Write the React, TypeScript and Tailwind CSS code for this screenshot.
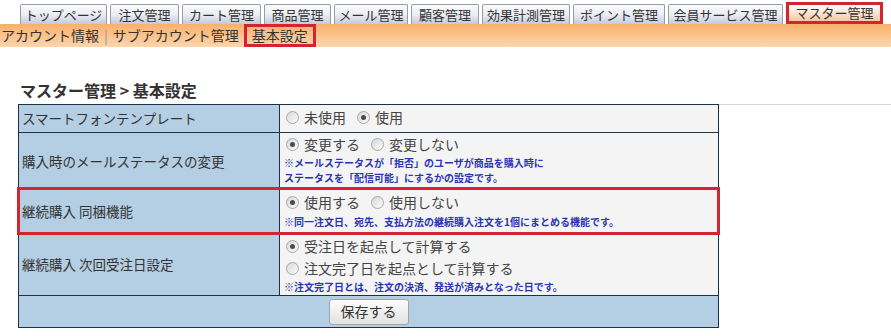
import React from "react";

const tabs: { label: string; w: string }[] = [
  { label: "トップページ", w: "w-[87px]" },
  { label: "注文管理", w: "w-[69px]" },
  { label: "カート管理", w: "w-[79px]" },
  { label: "商品管理", w: "w-[67px]" },
  { label: "メール管理", w: "w-[74px]" },
  { label: "顧客管理", w: "w-[68px]" },
  { label: "効果計測管理", w: "w-[88px]" },
  { label: "ポイント管理", w: "w-[92px]" },
  { label: "会員サービス管理", w: "w-[115px]" },
];

function Radio({ checked, label }: { checked?: boolean; label: string }) {
  return (
    <span className="inline-flex items-center gap-[5px] mr-[11px]">
      <span className="w-[13px] h-[13px] rounded-full border border-[#a9a9a9] bg-gradient-to-br from-[#d8d8d8] to-[#fbfbfb] flex items-center justify-center">
        {checked && <span className="w-[5px] h-[5px] rounded-full bg-[#4a4a4a]" />}
      </span>
      <span>{label}</span>
    </span>
  );
}

function Note({ children }: { children: React.ReactNode }) {
  return <div className="text-[10px] leading-[15px] font-bold text-[#2b35b3] -ml-[2px]">{children}</div>;
}

function Row({
  label,
  children,
  h,
  hl,
}: {
  label: string;
  children: React.ReactNode;
  h: string;
  hl?: boolean;
}) {
  return (
    <div
      className={
        "flex border-t border-[#1c3048] first:border-t-0 " +
        h +
        (hl ? " relative z-10 outline-[3px] outline-solid outline-[#d42430] -outline-offset-1" : "")
      }
    >
      <div className="w-[261px] shrink-0 border-r border-[#1c3048] flex items-center px-[3px] text-[13.5px] text-[#333]">
        {label}
      </div>
      <div className="flex-1 bg-[#f4f4f4] pl-[6px] pt-[1px] text-[14px] text-[#444] flex flex-col">{children}</div>
    </div>
  );
}

export default function App() {
  return (
    <div className="w-[891px] h-[336px] bg-white font-['Noto_Sans_CJK_JP',sans-serif] overflow-hidden">
      <nav className="flex items-end gap-[3px] pl-[20px] pt-[4px] h-[24px]">
        {tabs.map((t) => (
          <div
            key={t.label}
            className={
              t.w +
              " h-[20px] flex items-center justify-center text-[13px] text-[#333] border border-b-0 border-[#9a9ca4] rounded-t-[2px] bg-gradient-to-b from-[#fafafa] via-[#eceef4] to-[#c4c9dc]"
            }
          >
            {t.label}
          </div>
        ))}
        <div className="w-[97px] h-[22px] flex items-center justify-center text-[13px] text-[#333] border-[3px] border-[#d42430] bg-gradient-to-b from-[#ffffff] to-[#f8c7a1]">
          マスター管理
        </div>
      </nav>

      <div className="h-[23px] bg-gradient-to-b from-[#f9b06c] to-[#fdd5ad] flex items-center text-[14px] text-[#333]">
        <span className="pl-[1px]">アカウント情報</span>
        <span className="text-[#999] px-[5px]">|</span>
        <span>サブアカウント管理</span>
        <span className="ml-[5px] h-[23px] px-[5px] flex items-center border-[3px] border-[#d42430]">基本設定</span>
      </div>

      <div className="ml-[18px] mt-[33px] border-b border-[#d4d4d4] h-[25px]">
        <h1 className="pl-[2px] text-[16px] leading-[20px] font-bold text-[#333] whitespace-pre">マスター管理 &gt; 基本設定</h1>
      </div>

      <div className="ml-[18px] -mt-px w-[701px] border border-[#1c3048] bg-[#b4cee3]">
        <Row label="スマートフォンテンプレート" h="h-[27px]">
          <div className="flex items-center h-[22px]">
            <Radio label="未使用" />
            <Radio checked label="使用" />
          </div>
        </Row>
        <Row label="購入時のメールステータスの変更" h="h-[57px]">
          <div className="flex items-center h-[21px]">
            <Radio checked label="変更する" />
            <Radio label="変更しない" />
          </div>
          <Note>
            ※メールステータスが「拒否」のユーザが商品を購入時に
            <br />
            ステータスを「配信可能」にするかの設定です。
          </Note>
        </Row>
        <Row label="継続購入 同梱機能" h="h-[44px]" hl>
          <div className="flex items-center h-[23px]">
            <Radio checked label="使用する" />
            <Radio label="使用しない" />
          </div>
          <Note>※同一注文日、宛先、支払方法の継続購入注文を1個にまとめる機能です。</Note>
        </Row>
        <Row label="継続購入 次回受注日設定" h="h-[62px]">
          <div className="flex items-center h-[22px]">
            <Radio checked label="受注日を起点して計算する" />
          </div>
          <div className="flex items-center h-[22px]">
            <Radio label="注文完了日を起点として計算する" />
          </div>
          <Note>※注文完了日とは、注文の決済、発送が済みとなった日です。</Note>
        </Row>
        <div className="flex justify-center items-center h-[32px] border-t border-[#1c3048]">
          <button className="h-[26px] px-[11px] text-[14px] text-[#333] border border-[#a5a5a5] rounded-[3px] bg-gradient-to-b from-[#fdfdfd] to-[#e2e2e2]">
            保存する
          </button>
        </div>
      </div>
    </div>
  );
}
